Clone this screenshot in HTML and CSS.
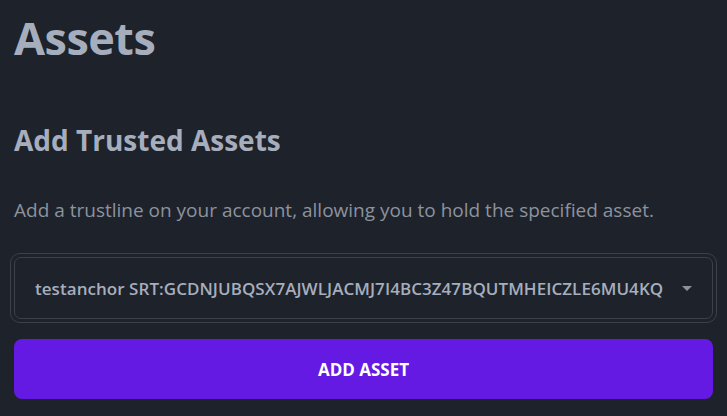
FILE: index.html
```html
<!DOCTYPE html>
<html>
<head>
<meta charset="utf-8">
<link rel="stylesheet" href="styles.css">
</head>
<body>
<main class="page">
  <h1 class="title">Assets</h1>
  <h2 class="subtitle">Add Trusted Assets</h2>
  <p class="desc">Add a trustline on your account, allowing you to hold the specified asset.</p>
  <div class="select-ring">
    <div class="select">
      <span class="select-value">testanchor SRT:GCDNJUBQSX7AJWLJACMJ7I4BC3Z47BQUTMHEICZLE6MU4KQ</span>
      <svg class="caret" width="10" height="5" viewBox="0 0 10 5"><path d="M0 0 L10 0 L5 5 Z" fill="#8a92a0"/></svg>
    </div>
  </div>
  <button class="btn">ADD ASSET</button>
</main>
</body>
</html>
```
FILE: styles.css
```css
html, body {
  margin: 0;
  padding: 0;
  background: #1e222a;
}
body {
  font-family: "Open Sans", "Noto Sans", sans-serif;
  color: #a6aebd;
}
.page {
  padding: 8px 14px 0 14px;
  display: flex;
  flex-direction: column;
}
.title {
  margin: 0;
  font-size: 45px;
  font-weight: 700;
  line-height: 60px;
  color: #a6aebd;
  letter-spacing: -0.5px;
}
.subtitle {
  margin: 52px 0 0 0;
  font-size: 28px;
  font-weight: 700;
  line-height: 40px;
  color: #a6aebd;
}
.desc {
  margin: 37px 0 0 0;
  font-size: 19px;
  line-height: 26px;
  color: #8c939f;
}
.select-ring {
  margin: 30px -4px 0 -4px;
  border: 1px solid #3b414a;
  border-radius: 10px;
  padding: 3px;
}
.select {
  border: 1px solid #3b414a;
  border-radius: 7px;
  height: 60px;
  display: flex;
  align-items: center;
  padding: 0 20px 0 20px;
}
.select-value {
  flex: 1;
  font-size: 17px;
  font-weight: 600;
  color: #a6aebd;
  white-space: nowrap;
  letter-spacing: 0.05px;
}
.caret {
  display: block;
}
.btn {
  margin-top: 16px;
  height: 60px;
  border: none;
  border-radius: 8px;
  background: #651ae3;
  color: #ffffff;
  font-family: "Open Sans", "Noto Sans", sans-serif;
  font-size: 17px;
  font-weight: 700;
  cursor: pointer;
}
```
